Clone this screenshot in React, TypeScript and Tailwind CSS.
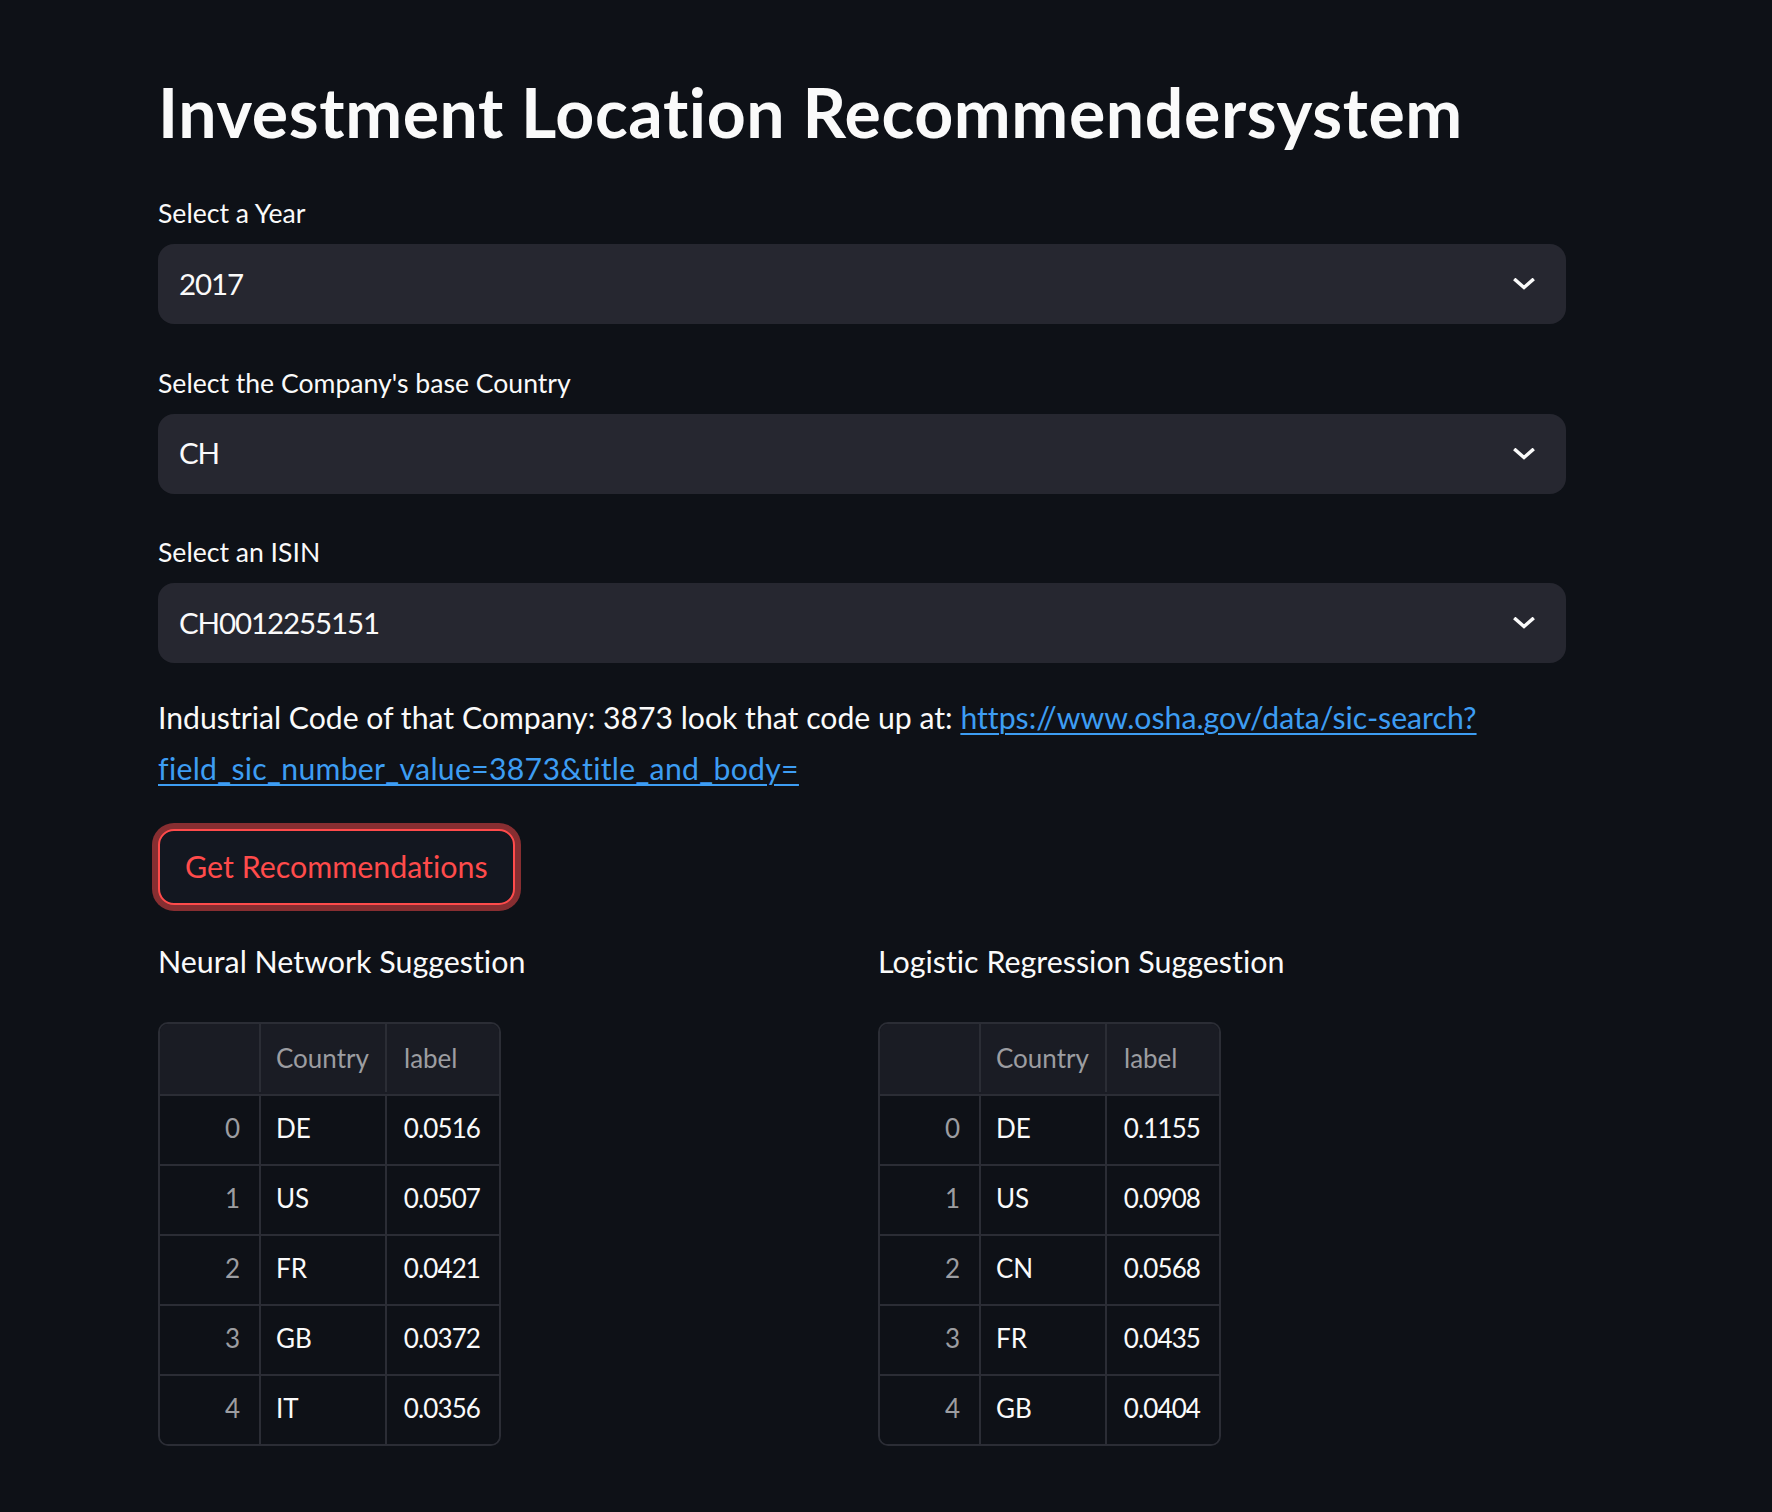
import React from "react";

const font = { fontFamily: "Lato, 'Noto Sans', sans-serif" };

const nnRows = [
  ["0", "DE", "0.0516"],
  ["1", "US", "0.0507"],
  ["2", "FR", "0.0421"],
  ["3", "GB", "0.0372"],
  ["4", "IT", "0.0356"],
];

const lrRows = [
  ["0", "DE", "0.1155"],
  ["1", "US", "0.0908"],
  ["2", "CN", "0.0568"],
  ["3", "FR", "0.0435"],
  ["4", "GB", "0.0404"],
];

function Chevron() {
  return (
    <svg width="22" height="12" viewBox="0 0 22 12" fill="none">
      <path
        d="M2.5 2 L11 9.5 L19.5 2"
        stroke="#fafafa"
        strokeWidth="3.4"
        strokeLinecap="square"
      />
    </svg>
  );
}

function SelectBox({
  label,
  value,
  first,
}: {
  label: string;
  value: string;
  first?: boolean;
}) {
  return (
    <div className={first ? "mt-[45px]" : "mt-[42.5px]"}>
      <div className="text-[26.6px] leading-[32px] text-[#fafafa]">{label}</div>
      <div className="mt-[15px] flex h-[80px] items-center justify-between rounded-[16px] bg-[#262730] pl-[21px] pr-[31px]">
        <span className="text-[29.5px] tracking-[-1.1px] text-[#fafafa]">{value}</span>
        <Chevron />
      </div>
    </div>
  );
}

function DataTable({ rows }: { rows: string[][] }) {
  return (
    <div className="mt-[35px] w-[343px] overflow-hidden rounded-[10px] border-2 border-[#2b2d35] text-[26px]">
      <div className="flex h-[70px] bg-[#1a1c24] pb-[2px] text-[#9c9da1]">
        <div className="w-[101px] border-r-2 border-[#2b2d35]" />
        <div className="flex w-[126px] items-center border-r-2 border-[#2b2d35] pl-[15px]">
          Country
        </div>
        <div className="flex w-[108px] items-center pl-[17px]">label</div>
      </div>
      {rows.map(([idx, country, value]) => (
        <div key={idx} className="flex h-[70px] border-t-2 border-[#2b2d35] bg-[#0e1117]">
          <div className="flex w-[101px] items-center justify-end border-r-2 border-[#2b2d35] pb-[3px] pr-[19px] text-[#9c9da1]">
            {idx}
          </div>
          <div className="flex w-[126px] items-center border-r-2 border-[#2b2d35] pb-[3px] pl-[15px] text-[#fafafa]">
            {country}
          </div>
          <div className="flex w-[108px] items-center justify-end pb-[3px] pr-[15px] tracking-[-0.9px] text-[#fafafa]">
            {value}
          </div>
        </div>
      ))}
    </div>
  );
}

export default function App() {
  return (
    <div
      className="min-h-screen w-full bg-[#0e1117] pb-[66px] [font-variant-ligatures:none]"
      style={font}
    >
      <div className="ml-[158px] w-[1408px] pt-[72px]">
        <h1 className="text-[68px] font-bold leading-[80px] tracking-[0.6px] text-[#fafafa]">
          Investment Location Recommendersystem
        </h1>

        <SelectBox label="Select a Year" value="2017" first />
        <SelectBox label="Select the Company's base Country" value="CH" />
        <SelectBox label="Select an ISIN" value="CH0012255151" />

        <p className="mt-[29px] text-[30.2px] leading-[51px] text-[#fafafa]">
          Industrial Code of that Company: 3873 look that code up at:{" "}
          <a
            href="#"
            className="text-[#3d9df3] underline decoration-[2px] underline-offset-[4px]"
          >
            https://www.osha.gov/data/sic-search?
            <br />
            <span className="tracking-[0.3px]">field_sic_number_value=3873&amp;title_and_body=</span>
          </a>
        </p>

        <button className="mt-[35px] h-[76px] rounded-[16px] border-2 border-[#ff4b4b] bg-[#131720] px-[25px] text-[30.4px] text-[#ff4b4b] shadow-[0_0_0_6px_rgba(255,75,75,0.5)]">
          Get Recommendations
        </button>

        <div className="mt-[31px] grid grid-cols-2 gap-[32px]">
          <div>
            <div className="text-[30.4px] leading-[51px] text-[#fafafa]">
              Neural Network Suggestion
            </div>
            <DataTable rows={nnRows} />
          </div>
          <div>
            <div className="text-[30.4px] leading-[51px] text-[#fafafa]">
              Logistic Regression Suggestion
            </div>
            <DataTable rows={lrRows} />
          </div>
        </div>
      </div>
    </div>
  );
}
